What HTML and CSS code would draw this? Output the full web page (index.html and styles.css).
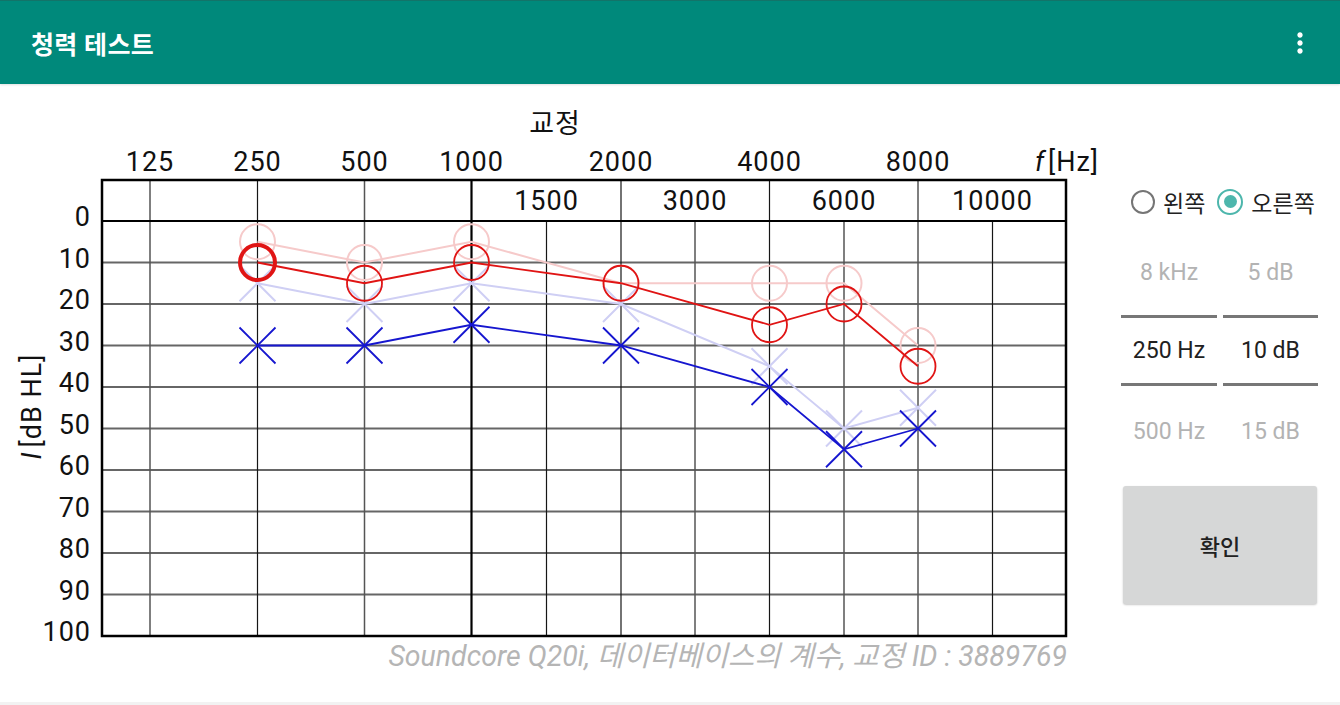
FILE: index.html
```html
<!DOCTYPE html>
<html lang="ko">
<head>
<meta charset="utf-8">
<title>청력 테스트</title>
<link rel="stylesheet" href="styles.css">
</head>
<body>
<header class="appbar">
  <h1 class="title">청력 테스트</h1>
  <svg class="menu" viewBox="0 0 24 24" width="32" height="32" aria-hidden="true"><path d="M12 8c1.1 0 2-.9 2-2s-.9-2-2-2-2 .9-2 2 .9 2 2 2zm0 2c-1.1 0-2 .9-2 2s.9 2 2 2 2-.9 2-2-.9-2-2-2zm0 6c-1.1 0-2 .9-2 2s.9 2 2 2 2-.9 2-2-.9-2-2-2z"/></svg>
</header>
<main class="content">
  <svg class="chart" viewBox="0 84 1110 618" width="1110" height="618">
    <!-- grid -->
    <g class="grid-h">
      <line x1="102" y1="262.5" x2="1066" y2="262.5"/>
      <line x1="102" y1="304" x2="1066" y2="304"/>
      <line x1="102" y1="345.5" x2="1066" y2="345.5"/>
      <line x1="102" y1="387" x2="1066" y2="387"/>
      <line x1="102" y1="428.5" x2="1066" y2="428.5"/>
      <line x1="102" y1="470" x2="1066" y2="470"/>
      <line x1="102" y1="511.5" x2="1066" y2="511.5"/>
      <line x1="102" y1="553" x2="1066" y2="553"/>
      <line x1="102" y1="594.5" x2="1066" y2="594.5"/>
    </g>
    <g class="grid-v">
      <line class="light" x1="150" y1="180" x2="150" y2="636"/>
      <line x1="257.5" y1="180" x2="257.5" y2="636"/>
      <line class="light" x1="364.5" y1="180" x2="364.5" y2="636"/>
      <line x1="621" y1="180" x2="621" y2="636"/>
      <line x1="769.5" y1="180" x2="769.5" y2="636"/>
      <line class="light" x1="918" y1="180" x2="918" y2="636"/>
      <line x1="546.5" y1="221" x2="546.5" y2="636"/>
      <line class="light" x1="695" y1="221" x2="695" y2="636"/>
      <line class="light" x1="844" y1="221" x2="844" y2="636"/>
      <line x1="992.5" y1="221" x2="992.5" y2="636"/>
    </g>
    <line class="axis-strong" x1="102" y1="221" x2="1066" y2="221"/>
    <line class="axis-strong" x1="471.5" y1="180" x2="471.5" y2="636"/>
    <rect class="frame" x="102" y="180" width="964" height="456"/>

    <!-- labels -->
    <text class="label mid" x="555" y="133">교정</text>
    <g class="label mid">
      <text x="150" y="171">125</text>
      <text x="257.5" y="171">250</text>
      <text x="364.5" y="171">500</text>
      <text x="471.5" y="171">1000</text>
      <text x="621" y="171">2000</text>
      <text x="769.5" y="171">4000</text>
      <text x="918" y="171">8000</text>
      <text x="546.5" y="209.5">1500</text>
      <text x="695" y="209.5">3000</text>
      <text x="844" y="209.5">6000</text>
      <text x="992.5" y="209.5">10000</text>
    </g>
    <text class="label end" x="1099" y="171"><tspan class="it">f</tspan><tspan dx="3">[Hz]</tspan></text>
    <g class="label end">
      <text x="91" y="226">0</text>
      <text x="91" y="267.5">10</text>
      <text x="91" y="309">20</text>
      <text x="91" y="350.5">30</text>
      <text x="91" y="392">40</text>
      <text x="91" y="433.5">50</text>
      <text x="91" y="475">60</text>
      <text x="91" y="516.5">70</text>
      <text x="91" y="558">80</text>
      <text x="91" y="599.5">90</text>
      <text x="91" y="641">100</text>
    </g>
    <text class="label mid" transform="translate(41 406.5) rotate(-90)"><tspan class="it">I</tspan><tspan dx="4">[dB HL]</tspan></text>

    <!-- old right (light red) -->
    <g class="s-lred">
      <polyline points="257.5,241.75 364.5,262.5 471.5,241.75 621,283.25 769.5,283.25 844,283.25 918,345.5"/>
      <circle cx="257.5" cy="241.75" r="17.5"/>
      <circle cx="364.5" cy="262.5" r="17.5"/>
      <circle cx="471.5" cy="241.75" r="17.5"/>
      <circle cx="621" cy="283.25" r="17.5"/>
      <circle cx="769.5" cy="283.25" r="17.5"/>
      <circle cx="844" cy="283.25" r="17.5"/>
      <circle cx="918" cy="345.5" r="17.5"/>
    </g>
    <!-- old left (light blue) -->
    <g class="s-lblue">
      <polyline points="257.5,283.25 364.5,304 471.5,283.25 621,304 769.5,366.25 844,428.5 918,407.75"/>
      <path d="M239.5 265.25l36 36M275.5 265.25l-36 36
               M346.5 286l36 36M382.5 286l-36 36
               M453.5 265.25l36 36M489.5 265.25l-36 36
               M603 286l36 36M639 286l-36 36
               M751.5 348.25l36 36M787.5 348.25l-36 36
               M826 410.5l36 36M862 410.5l-36 36
               M900 389.75l36 36M936 389.75l-36 36"/>
    </g>
    <!-- right (red) -->
    <g class="s-red">
      <polyline points="257.5,262.5 364.5,283.25 471.5,262.5 621,283.25 769.5,324.75 844,304 918,366.25"/>
      <circle class="sel" cx="257.5" cy="262.5" r="17.5"/>
      <circle cx="364.5" cy="283.25" r="17.5"/>
      <circle cx="471.5" cy="262.5" r="17.5"/>
      <circle cx="621" cy="283.25" r="17.5"/>
      <circle cx="769.5" cy="324.75" r="17.5"/>
      <circle cx="844" cy="304" r="17.5"/>
      <circle cx="918" cy="366.25" r="17.5"/>
    </g>
    <!-- left (blue) -->
    <g class="s-blue">
      <polyline points="257.5,345.5 364.5,345.5 471.5,324.75 621,345.5 769.5,387 844,449.25 918,428.5"/>
      <path d="M239.5 327.5l36 36M275.5 327.5l-36 36
               M346.5 327.5l36 36M382.5 327.5l-36 36
               M453.5 306.75l36 36M489.5 306.75l-36 36
               M603 327.5l36 36M639 327.5l-36 36
               M751.5 369l36 36M787.5 369l-36 36
               M826 431.25l36 36M862 431.25l-36 36
               M900 410.5l36 36M936 410.5l-36 36"/>
    </g>

    <text class="caption" x="1067" y="666">Soundcore Q20i, 데이터베이스의 계수, 교정 ID : 3889769</text>
  </svg>

  <aside class="panel">
    <div class="ear-row">
      <span class="radio"></span><span class="radio-label">왼쪽</span>
      <span class="radio checked"></span><span class="radio-label">오른쪽</span>
    </div>
    <div class="picker">
      <div class="pick-col">
        <div class="pick-item top faded">8 kHz</div>
        <div class="pick-divider"></div>
        <div class="pick-item current">250 Hz</div>
        <div class="pick-divider"></div>
        <div class="pick-item bottom faded">500 Hz</div>
      </div>
      <div class="pick-col">
        <div class="pick-item top faded">5 dB</div>
        <div class="pick-divider"></div>
        <div class="pick-item current">10 dB</div>
        <div class="pick-divider"></div>
        <div class="pick-item bottom faded">15 dB</div>
      </div>
    </div>
    <button class="confirm" type="button">확인</button>
  </aside>
</main>
<div class="bottom-edge"></div>
</body>
</html>
```
FILE: styles.css
```css
html, body {
  margin: 0;
  padding: 0;
}
body {
  width: 1340px;
  height: 705px;
  overflow: hidden;
  background: #ffffff;
  font-family: Roboto, "Noto Sans CJK KR", sans-serif;
  color: #212121;
}
.appbar {
  height: 84px;
  box-sizing: border-box;
  background: #00897b;
  border-top: 1px solid #137469;
  display: flex;
  align-items: center;
  justify-content: space-between;
  padding: 0 24px 0 31px;
  box-shadow: 0 1px 2px rgba(0, 0, 0, 0.12);
  position: relative;
}
.title {
  margin: 0;
  font-family: Roboto, "Noto Sans CJK KR", sans-serif;
  font-size: 25px;
  font-weight: 700;
  color: #ffffff;
  letter-spacing: 0.3px;
}
.menu {
  display: block;
  fill: #ffffff;
}
.content {
  display: flex;
  height: 618px;
}
.bottom-edge {
  height: 3px;
  background: #f2f2f2;
}
.chart {
  display: block;
  flex: none;
}
.grid-h line {
  stroke: #666666;
  stroke-width: 2;
}
.grid-v line {
  stroke: #161616;
  stroke-width: 1.2;
}
.grid-v line.light {
  stroke: #555555;
  stroke-width: 1.5;
}
.axis-strong {
  stroke: #000000;
  stroke-width: 2.2;
}
.frame {
  fill: none;
  stroke: #000000;
  stroke-width: 2.5;
}
.label {
  font-family: Roboto, "Noto Sans CJK KR", sans-serif;
  font-size: 27px;
  fill: #111111;
  letter-spacing: 1px;
}
.mid, .mid text { text-anchor: middle; }
.end, .end text { text-anchor: end; }
.it { font-style: italic; }
.caption {
  font-family: Roboto, "Noto Sans CJK KR", sans-serif;
  font-size: 28.5px;
  font-style: italic;
  fill: #b5b5b5;
  text-anchor: end;
}
.s-lred polyline, .s-lred circle {
  fill: none;
  stroke: #f6caca;
  stroke-width: 2;
}
.s-lblue polyline, .s-lblue path {
  fill: none;
  stroke: #cfcff4;
  stroke-width: 2;
}
.s-red polyline, .s-red circle {
  fill: none;
  stroke: #e01414;
  stroke-width: 1.8;
}
.s-red circle.sel {
  stroke-width: 4;
}
.s-blue polyline, .s-blue path {
  fill: none;
  stroke: #1616cf;
  stroke-width: 1.8;
}
.panel {
  width: 197px;
  margin-left: 11px;
  padding-top: 102px;
  display: flex;
  flex-direction: column;
}
.ear-row {
  height: 31px;
  display: flex;
  align-items: center;
  padding-left: 10px;
  font-size: 23px;
  font-family: Roboto, "Noto Sans CJK KR", sans-serif;
  white-space: nowrap;
}
.radio {
  width: 24px;
  height: 24px;
  box-sizing: border-box;
  border: 2.5px solid #757575;
  border-radius: 50%;
  flex: none;
  display: flex;
  align-items: center;
  justify-content: center;
}
.radio.checked {
  border-color: #4db6ac;
  width: 26px;
  height: 26px;
  margin-left: 12px;
}
.radio.checked::after {
  content: "";
  width: 13px;
  height: 13px;
  border-radius: 50%;
  background: #4db6ac;
}
.radio-label {
  flex: none;
  margin-left: 8px;
  color: #212121;
}
.picker {
  margin-top: 12px;
  display: grid;
  grid-template-columns: 96px 95px;
  column-gap: 6px;
}
.pick-col {
  display: flex;
  flex-direction: column;
}
.pick-item {
  display: flex;
  align-items: center;
  justify-content: center;
  font-size: 23px;
  height: 65px;
}
.pick-item.top { height: 86px; }
.pick-item.bottom { height: 90px; }
.pick-item.faded { color: #b3b3b3; }
.pick-item.current { color: #212121; }
.pick-divider {
  height: 3px;
  background: #777777;
}
.confirm {
  margin: 10px 0 0 2px;
  width: 194px;
  height: 118px;
  border: none;
  border-radius: 3px;
  background: #d6d7d7;
  box-shadow: 0 1px 2px rgba(0, 0, 0, 0.22);
  font-family: Roboto, "Noto Sans CJK KR", sans-serif;
  font-size: 22px;
  font-weight: 500;
  color: #212121;
  padding: 0;
}
```
